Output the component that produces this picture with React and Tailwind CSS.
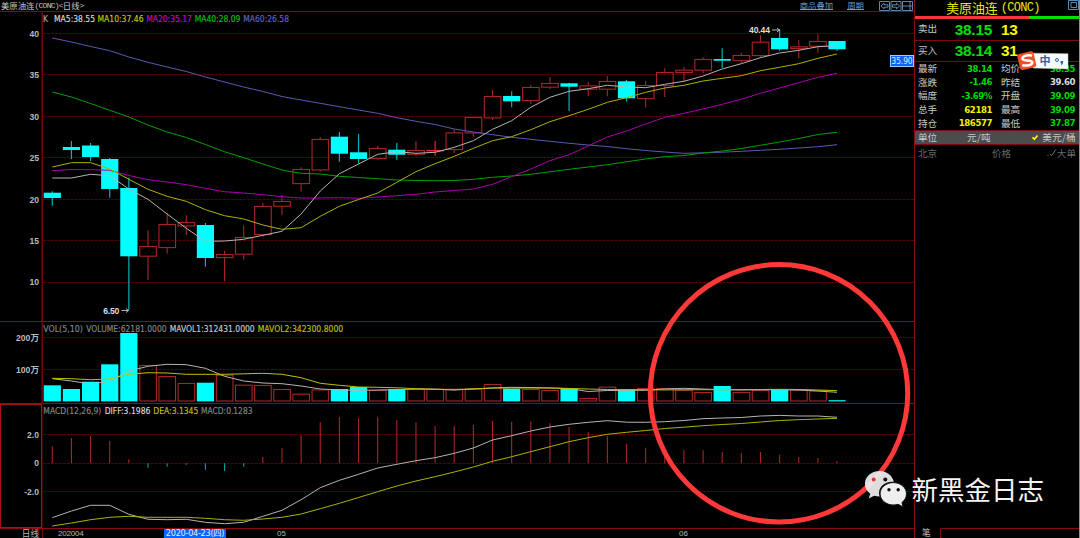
const X0 = 52.3;
const STEP = 19.14;
const cx = (i) => X0 + i * STEP;

// [top, bottom, high, low, down?]
const CANDLES = [
  [192.7, 198, 191.3, 205.7, 1], [147, 150, 141, 159, 1], [145.5, 157, 143, 161, 1], [159, 189, 158, 197.7, 1],
  [188, 256.3, 177.5, 310, 1], [246.3, 256.3, 230.3, 280], [224.3, 247.7, 213.3, 253.7], [222.3, 226, 215.3, 235],
  [225, 258, 223, 266.7, 1], [254.3, 257.7, 251, 281.3], [237.3, 254.3, 225.3, 259.7], [206.3, 234.7, 203, 236.7],
  [201.3, 206.3, 195, 215], [169.3, 183.7, 167.3, 191.7], [139.3, 170, 137, 171.7], [136.7, 153.7, 132, 161.7, 1],
  [152.3, 159, 134, 163.7, 1], [148.3, 158.7, 146, 159.7], [149.7, 154.7, 143, 159.7, 1], [150.3, 154.3, 141.3, 156.3],
  [150.3, 150.9, 141, 156], [132.7, 149.7, 129.3, 153], [117.3, 133, 117.3, 136.7], [96.3, 118, 90, 120],
  [96, 101.3, 91.3, 107.3, 1], [87.3, 100.7, 84.7, 103.7], [83.3, 87.3, 77, 89], [83.3, 86.7, 82.7, 111, 1],
  [85.7, 89.3, 81.7, 96.3], [81.3, 89.3, 76, 96.3], [81.3, 98.3, 80, 101.7, 1], [85.3, 98.7, 81, 107.3],
  [72.3, 85.7, 68.3, 97], [70, 72.6, 67, 81], [59.3, 70.3, 57, 73], [59, 60.7, 48.3, 68, 1],
  [55.3, 60.7, 52.7, 63.3], [42, 55.7, 35.3, 57.3], [38, 49.3, 29.3, 50.7, 1], [46.7, 48.7, 40, 58],
  [41.3, 46.3, 34, 52.7], [41, 49.3, 41, 51, 1],
];

const MA5 = [178, 178, 174.3, 175.7, 189, 199.3, 214, 228.3, 241.3, 241, 239.3, 235.3, 231.3, 214, 191, 173.7, 164, 154.3, 151.7, 153.3, 152.3, 147.3, 140.7, 129.3, 120.7, 107.3, 97.3, 91.3, 88.7, 85.3, 87, 87.7, 84.3, 81.3, 76, 69, 63.7, 57.7, 53, 50.3, 46.7, 45.7];
const MA10 = [167, 162.7, 162.7, 169, 179.3, 189.3, 196.3, 201.3, 209.7, 215.7, 219, 225, 229.3, 227.7, 216.3, 206.3, 199.5, 193, 182.3, 171.7, 163.7, 156.3, 148.3, 140.7, 136.7, 129.7, 121.7, 115.7, 109.3, 102.3, 97.7, 92.3, 88, 85.3, 81, 78.3, 75.7, 70.7, 67.3, 63.7, 58.3, 54];
const MA20 = [170.7, 169.5, 169.7, 170.3, 175.5, 179.7, 182, 184.7, 188.3, 191.7, 193, 194.7, 196.7, 198, 198, 197.7, 198.3, 197, 195.7, 194.3, 192, 190.5, 189, 184.3, 176.7, 169, 160.7, 154.7, 146, 137, 131, 124, 117.3, 113.3, 109, 104.3, 99.3, 93.3, 88, 82.7, 77.3, 73.3];
const MA40 = [92, 97, 103.5, 110.3, 117, 125, 132, 137.5, 144.5, 151.7, 157.7, 164, 170, 173.3, 174, 176.3, 177.5, 178.7, 180, 180.5, 180.7, 180.5, 179.3, 177.3, 176, 174.3, 171.8, 169.3, 167, 164.7, 161.8, 159, 156.7, 155.5, 153, 151, 148.5, 145.3, 142, 138.5, 134.5, 132.3];
const MA60 = [38, 42, 46.5, 50.7, 57, 62.3, 67, 71.5, 77, 82, 87, 91.5, 96.5, 100, 103.3, 106.7, 110, 113.3, 117.7, 121.3, 124.5, 129, 132, 134.7, 137.3, 139.3, 141.3, 143.3, 145, 146.5, 148.7, 150.5, 152, 153.3, 152.8, 152.2, 151.3, 150.3, 149.3, 148, 146.7, 144.7];

const VOL = [385.3, 389, 381.7, 364.3, 333, 365.3, 376.3, 383.3, 382.7, 375, 385, 385.3, 389.3, 394, 389.7, 389, 387, 390.3, 389, 389, 389, 389, 389, 384.3, 388.7, 389.3, 390.3, 388.7, 398.3, 387, 389.3, 388.3, 388.3, 390, 392.3, 386, 392.3, 390.3, 389.7, 390, 390.7, 400.2];
const MAVOL1 = [378.7, 381, 384, 381.3, 371, 366.3, 364.3, 364.7, 368.3, 376.3, 381, 383, 383.7, 386, 389, 390, 390.3, 390, 389.7, 389, 389.3, 390, 389, 388, 387.3, 387.5, 388, 388.5, 391.5, 390.5, 390.3, 390.3, 389, 388.3, 389, 389.7, 390, 389.7, 389.7, 390, 391, 392.3];
const MAVOL2 = [378.3, 378.7, 379.7, 379, 374.3, 372.7, 373, 374.3, 374.3, 374.3, 373.8, 373.3, 374.3, 377.7, 383.3, 385.3, 387, 387.3, 387.8, 388.7, 389.2, 389.7, 388.8, 388, 388, 388, 388, 388.5, 389, 389.5, 389.7, 389.7, 389.9, 389.8, 389.7, 389.7, 389.6, 389.5, 389.3, 389.5, 390, 390.7];

const MACD = [446.3, 438, 435.7, 441, 459.3, 467.7, 466.7, 464.7, 469.7, 471, 466.7, 456.7, 448, 435.3, 422, 417, 418, 417, 420, 422.3, 426, 426.3, 425, 421, 421.7, 421.7, 423.3, 427, 432, 436, 444, 448, 451, 450.3, 450.3, 452, 453, 452, 454.7, 456.7, 458, 461.3];
const DIFF = [517.7, 511, 505.3, 505.3, 514.3, 519.3, 519.7, 519.3, 522.3, 523.7, 522.3, 516.3, 510.3, 499.7, 487.7, 480.3, 474.3, 468, 464.3, 460.7, 457.7, 453.3, 448, 440, 435.7, 431, 427, 424.3, 422.3, 420.7, 422.2, 422.3, 421.7, 420.5, 418.7, 418, 417.5, 416, 415.4, 416, 416, 417.3];
const DEA = [526, 523, 519.7, 517.3, 516.3, 517.3, 517.3, 517.3, 518.3, 519.7, 520.3, 519, 517.3, 514, 508.7, 503.3, 497.5, 491.7, 486, 481, 476.7, 472, 467, 461.3, 456.7, 451.7, 446.7, 441.7, 437.7, 434.3, 432.3, 430.5, 428.5, 427.2, 425.7, 424.5, 423.5, 422, 420.5, 419.7, 419, 418.3];

const WHITE = '#b4b4b4';
const YELLOW = '#b0b000';
const CYAN = '#00ffff';
const RED = '#a82626';

function Line({ data, color }) {
  return (
    <polyline
      points={data.map((y, i) => `${cx(i)},${y}`).join(' ')}
      fill="none"
      stroke={color}
      strokeWidth="1"
    />
  );
}

function Grid({ rows }) {
  return rows.map((y) => (
    <line key={y} x1="43" x2="914" y1={y} y2={y} stroke="#580000" strokeWidth="1" strokeDasharray="3 1" />
  ));
}

// Legend entries: [text, x, width, color]
function Legend({ items, y }) {
  return items.map(([text, x, width, color]) => (
    <text key={text} x={x} y={y} textLength={width} lengthAdjust="spacingAndGlyphs" fill={color} stroke={color} strokeWidth="0.15"
      className="font-['DejaVu_Sans'] text-[8.6px]">{text}</text>
  ));
}

function Axis({ labels }) {
  return labels.map(([text, y]) => (
    <text key={text} x="39" y={y + 3} textAnchor="end" fill="#b8b8b8"
      className="font-['Liberation_Sans','Noto_Sans_CJK_SC',sans-serif] text-[8.6px] font-bold">{text}</text>
  ));
}

function PricePanel() {
  return (
    <svg width="914" height="309" viewBox="0 12 914 309" className="block">
      <Grid rows={[33.5, 74.5, 116.5, 157.5, 199.5, 240.5, 282.5]} />
      <Axis labels={[['40', 33.5], ['35', 75], ['30', 116.5], ['25', 158], ['20', 199.5], ['15', 240.5], ['10', 282]]} />
      <line x1="42.2" x2="42.2" y1="12" y2="321" stroke="#7a0a0a" strokeWidth="1.4" />
      <Legend y="22.2" items={[
        ['K', 43, 5, '#aaaaaa'],
        ['MA5:38.55', 54, 41, '#dddddd'],
        ['MA10:37.46', 97.5, 46, '#c8c800'],
        ['MA20:35.17', 146.3, 45.5, '#cc00cc'],
        ['MA40:28.09', 194.7, 45.7, '#00c800'],
        ['MA60:26.58', 243.3, 45.7, '#6464c8'],
      ]} />
      {CANDLES.map(([top, bottom, high, low, down], i) => {
        const x = cx(i);
        return down ? (
          <g key={i}>
            <line x1={x} x2={x} y1={high} y2={low} stroke="#00b4b4" strokeWidth="1.2" />
            <rect x={x - 8.6} y={top} width="17.2" height={bottom - top} fill={CYAN} />
          </g>
        ) : (
          <g key={i} stroke={i === 20 ? '#ee3030' : RED} strokeWidth="1.1" fill="none">
            <path d={`M${x} ${high}V${top}M${x} ${bottom}V${low}`} />
            <rect x={x - 8.2} y={top + 0.2} width="16.6" height={bottom - top - 0.3} />
          </g>
        );
      })}
      <Line data={MA60} color="#5a5ab4" />
      <Line data={MA40} color="#00a000" />
      <Line data={MA20} color="#aa00aa" />
      <Line data={MA10} color={YELLOW} />
      <Line data={MA5} color={WHITE} />
      <g fill="#dddddd" className="font-['Liberation_Sans'] text-[8.6px] font-bold">
        <text x="749" y="33" textLength="21">40.44</text>
        <text x="103.3" y="314" textLength="16">6.50</text>
      </g>
      <path d="M772 30h7.5m-2.5-2 2.5 2-2.5 2M121.5 310.5h7m-2.5-2 2.5 2-2.5 2" fill="none" stroke="#cccccc" strokeWidth="0.9" />
      <rect x="890.5" y="55.5" width="23" height="11" fill="#0a64ff" stroke="#a0c8ff" strokeWidth="1" />
      <text x="891.5" y="64.3" textLength="21" lengthAdjust="spacingAndGlyphs" fill="#e0f0ff" className="font-['DejaVu_Sans'] text-[8px]">35.90</text>
    </svg>
  );
}

function VolumePanel() {
  return (
    <svg width="914" height="82" viewBox="0 321 914 82" className="block">
      <line x1="0" x2="914" y1="321.5" y2="321.5" stroke="#8c0c0c" />
      <Grid rows={[337.5, 369.5]} />
      <Axis labels={[['200万', 338], ['100万', 370]]} />
      <line x1="42.2" x2="42.2" y1="321" y2="403" stroke="#7a0a0a" strokeWidth="1.4" />
      {VOL.map((y, i) => (CANDLES[i][4] ? (
        <rect key={i} x={cx(i) - 8.6} y={y} width="17.2" height={401.4 - y} fill={CYAN} />
      ) : (
        <rect key={i} x={cx(i) - 8.2} y={y + 0.2} width="16.6" height={400.8 - y} fill="none" stroke={RED} strokeWidth="1.1" />
      )))}
      <Line data={MAVOL1} color={WHITE} />
      <Line data={MAVOL2} color="#c0c000" />
      <Legend y="331.5" items={[
        ['VOL(5,10)', 43.3, 39.5, '#888888'],
        ['VOLUME:62181.0000', 86.3, 80.3, '#888888'],
        ['MAVOL1:312431.0000', 169.7, 85, '#cccccc'],
        ['MAVOL2:342300.8000', 257.7, 85.5, '#c0c000'],
      ]} />
    </svg>
  );
}

function MacdPanel() {
  return (
    <svg width="914" height="125" viewBox="0 403 914 125" className="block">
      <line x1="0" x2="914" y1="403.5" y2="403.5" stroke="#8c0c0c" />
      <Grid rows={[434.5, 463.5, 491.5]} />
      <Axis labels={[['2.0', 434.5], ['0', 463.2], ['-2.0', 491.5]]} />
      <rect x="0.5" y="404.5" width="41" height="123" fill="none" stroke="#b01010" />
      <line x1="42.8" x2="42.8" y1="403" y2="528" stroke="#5a0808" strokeWidth="0.8" />
      {MACD.map((y, i) => (
        <line key={i} x1={cx(i)} x2={cx(i)} y1="463.3" y2={y} stroke={y > 463.3 ? '#00a0a0' : RED} strokeWidth="1.1" />
      ))}
      <Line data={DIFF} color={WHITE} />
      <Line data={DEA} color={YELLOW} />
      <Legend y="413.8" items={[
        ['MACD(12,26,9)', 43.3, 58, '#888888'],
        ['DIFF:3.1986', 104.7, 45.7, '#dddddd'],
        ['DEA:3.1345', 153.3, 45, '#c0c000'],
        ['MACD:0.1283', 201, 51.5, '#888888'],
      ]} />
    </svg>
  );
}

function Header() {
  return (
    <div className="flex h-3 items-center border-b border-[#7c0a0a] text-[8.4px] leading-none whitespace-nowrap">
      <div className="flex items-center pl-px text-[#c8c8c8]">
        美原油连<span className="font-['Liberation_Mono'] text-[8px] tracking-[-0.75px]">(CONC)&lt;</span>日线<span className="font-['Liberation_Mono'] text-[8px]">&gt;</span>
      </div>
      <div className="ml-auto mr-px flex items-center text-[#6c9ccc]">
        <span className="mr-[14px] border-b border-[#6c9ccc]">商品叠加</span>
        <span className="mr-[15px] border-b border-[#6c9ccc]">周期</span>
        <svg width="34" height="10" viewBox="0 0 34 10" fill="none" stroke="#7094b8" strokeWidth="0.9">
          <path d="M.5 .5h10v9h-10zM12 .5h10v9H12zM23.5 .5h10v9h-10z" />
          <path d="M2 5l3-2.8v1.6h4v2.4H5v1.6zM20.5 5l-3-2.8v1.6h-4v2.4h4v1.6zM24 5h9M31 .5v9" />
        </svg>
      </div>
    </div>
  );
}

function Footer() {
  return (
    <div className="flex h-[10px] items-center border-t border-[#8c0c0c] text-[8px] leading-none whitespace-nowrap text-[#b8b8b8]">
      <div className="w-[42px] pr-[3px] text-right text-[8.6px]">日线</div>
      <div className="flex flex-1 items-center border-l border-[#7a0a0a] pl-[15px] font-['Liberation_Sans','Noto_Sans_CJK_SC',sans-serif]">
        <span className="w-[106px] tracking-[-0.2px]">202004</span>
        <span className="mr-[51px] flex h-[10px] w-[62px] items-center justify-center bg-[#0a64ff] font-['DejaVu_Sans','Noto_Sans_CJK_SC',sans-serif] text-[8.2px] tracking-[-0.3px] text-[#e0f0ff]">2020-04-23(四)</span>
        <span className="w-[402px]">05</span>
        <span>06</span>
      </div>
    </div>
  );
}

const QUOTES = [
  ['最新', '38.14', 'text-[#00d800]', '均价', '38.35', 'text-[#00d800]'],
  ['涨跌', '-1.46', 'text-[#00d800]', '昨结', '39.60', 'text-[#dddddd]'],
  ['幅度', '-3.69%', 'text-[#00d800]', '开盘', '39.09', 'text-[#00d800]'],
  ['总手', '62181', 'text-[#f0f000]', '最高', '39.09', 'text-[#00d800]'],
  ['持仓', '186577', 'text-[#f0f000]', '最低', '37.87', 'text-[#00d800]'],
];

function ImeBadge() {
  return (
    <svg width="54" height="22" viewBox="0 0 54 22" className="absolute top-[50px] left-[102px]">
      <path d="M16 3.2 51 3.8V19L16 18z" fill="#f8fafc" stroke="#c8ccd0" strokeWidth="0.5" />
      <rect x="1.6" y="2.4" width="16.6" height="16.4" rx="2.6" fill="#f05028" transform="rotate(-13 10 11)" />
      <path d="M15.2 5.6C10 4.5 4.5 6.2 5.6 9c1 2.5 9.4.6 9.7 3.4.3 2.8-6 3.8-10 2.8" fill="none" stroke="#fff" strokeWidth="2.5" />
      <text x="22.5" y="15.4" fill="#1c68b4" className="font-['Noto_Sans_CJK_SC'] text-[11px] font-bold">中</text>
      <circle cx="40" cy="10" r="1.5" fill="none" stroke="#1c68b4" strokeWidth="1" />
      <path d="M43.6 11h2.6c.2 2.4-.6 3.8-2.2 4.4.6-1.3.4-2.2-.4-2.5z" fill="#1c68b4" />
    </svg>
  );
}

function QuotePanel() {
  return (
    <aside className="relative flex w-[166px] flex-col border-x border-l-[#8c0c0c] border-r-[#909090] text-[#c8c8c8]">
      <div className="relative flex h-4 items-center justify-center pr-[8px] text-[13px] leading-4 text-[#e8e800]">
        <span className="text-[12.9px]">美原油连</span>
        <span className="ml-[3px] font-['Liberation_Mono'] text-[12px] tracking-[-0.7px]">(CONC)</span>
        <svg width="11" height="10" viewBox="0 0 11 10" className="absolute top-0 right-0" fill="none" stroke="#6088a8">
          <path d="M.5 .5h10v9H.5zM3 2.5h5.5v5H3z" />
        </svg>
      </div>
      <div className="flex h-[3px]">
        <div className="w-[114px] bg-[#ff3434]" />
        <div className="flex-1 bg-[#00e000]" />
      </div>
      {[['卖出', '38.15', '13'], ['买入', '38.14', '31']].map(([label, price, lots]) => (
        <div key={label} className="flex h-[21.5px] items-center border-b border-[#7c0a0a] pl-[3px] text-[9.6px] leading-none">
          <span className="w-[20px]">{label}</span>
          <span className="w-[54px] text-right font-['Liberation_Sans'] text-[15.4px] font-bold tracking-[-0.25px] text-[#00e000]">{price}</span>
          <span className="ml-[9px] font-['Liberation_Sans'] text-[15.4px] font-bold tracking-[-0.25px] text-[#f8f800]">{lots}</span>
        </div>
      ))}
      <div className="grid grid-cols-[20px_54px_29px_54px] auto-rows-[13.7px] items-center pl-[3px] text-[9.6px] leading-none">
        {QUOTES.flatMap(([a, av, ac, b, bv, bc]) => [
          <span key={a}>{a}</span>,
          <span key={a + 'v'} className={`${ac} text-right font-['DejaVu_Sans'] text-[8.6px] font-bold tracking-[-0.45px]`}>{av}</span>,
          <span key={b} className="pl-[9px]">{b}</span>,
          <span key={b + 'v'} className={`${bc} text-right font-['DejaVu_Sans'] text-[8.6px] font-bold tracking-[-0.45px]`}>{bv}</span>,
        ])}
      </div>
      <div className="flex h-[15px] items-center border-y border-[#7c0a0a] bg-[#4c4c4c] pr-[3px] pl-[3px] text-[9.6px] leading-none">
        <span className="w-[49px]">单位</span>
        <span className="tracking-[0.3px]">元/吨</span>
        <svg width="8" height="7" viewBox="0 0 8 7" className="mr-[3px] ml-auto" fill="none" stroke="#ffff00" strokeWidth="1.6">
          <path d="M1.5 3.2l1.8 2L6.5 1.5" />
        </svg>
        <span className="tracking-[0.3px]">美元/桶</span>
      </div>
      <div className="flex h-[16px] items-center px-[3px] text-[9.6px] leading-none text-[#686868]">
        <span className="w-[74px]">北京</span>
        <span>价格</span>
        <svg width="10" height="8" viewBox="0 0 10 8" className="ml-auto" fill="none" stroke="#787878" strokeWidth="0.9">
          <path d="M.5 6.5h1M3 5l1.5 1.5L9 .5" />
        </svg>
        <span>大单</span>
      </div>
      <div className="mt-auto flex h-[10px] text-[8.6px] leading-none">
        <span className="w-[25px] pl-[7px]">笔</span>
        <div className="flex-1 rounded-tl-[2px] border-t border-l border-[#8c0c0c]" />
      </div>
      <ImeBadge />
    </aside>
  );
}

// Highlight ring and channel signature, drawn on top of everything
function Overlay() {
  return (
    <svg width="1080" height="538" viewBox="0 0 1080 538" className="pointer-events-none absolute inset-0">
      <circle cx="779" cy="393.3" r="128.7" fill="none" stroke="#ff3838" strokeWidth="5" />
      <g fill="#eeeeee">
        <path fillOpacity="0.93" d="M879.5 471c-8.2 0-14.6 5.7-14.6 12.8 0 4.2 2.1 7.5 5.4 9.9l-1.6 4.8 5.4-2.8c1.9.6 3.7.8 5.7.8-3-9 5-15.5 14-14.8-1.3-6.2-7.4-10.7-14.3-10.7z" />
        <path stroke="#111" strokeWidth="1" d="M906.5 493.8c0-6.2-5.9-11.2-13.2-11.2s-13.2 5-13.2 11.2 5.9 11.2 13.2 11.2c1.7 0 3.2-.2 4.7-.7l5.2 2.6-1.3-4.3c2.9-2.3 4.6-5.2 4.6-8.8z" />
      </g>
      <circle cx="873.7" cy="479.4" r="2" fill="#e83434" />
      <circle cx="885.3" cy="479.4" r="2" fill="#111" />
      <circle cx="889" cy="489.7" r="1.7" fill="#111" />
      <circle cx="898.2" cy="489.7" r="1.7" fill="#111" />
      <text x="911.5" y="500.3" fill="#f4f4f4" textLength="132.5" className="font-['Noto_Sans_CJK_SC',sans-serif] text-[26.5px]">新黑金日志</text>
    </svg>
  );
}

export default function App() {
  return (
    <div className="relative flex h-[538px] w-[1080px] overflow-hidden bg-black font-['Noto_Sans_CJK_SC',sans-serif]">
      <main className="flex w-[914px] flex-col">
        <Header />
        <PricePanel />
        <VolumePanel />
        <MacdPanel />
        <Footer />
      </main>
      <QuotePanel />
      <Overlay />
    </div>
  );
}
